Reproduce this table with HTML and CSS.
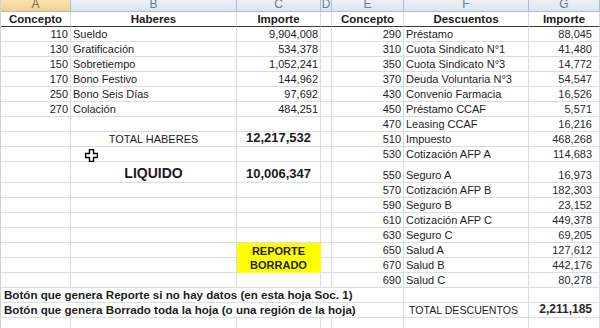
FILE: index.html
```html
<!DOCTYPE html>
<html lang="es">
	<head>
		<meta charset="UTF-8" />
		<meta name="viewport" content="width=device-width, initial-scale=1.0" />
		<title>Liquidación</title>
		<link rel="stylesheet" href="styles.css">
	</head>
	<body>
		<section class="sheet">
			<div class="row letters">
				<div class="c sel">A</div>
				<div class="c">B</div>
				<div class="c">C</div>
				<div class="c">D</div>
				<div class="c">E</div>
				<div class="c">F</div>
				<div class="c">G</div>
			</div>

			<div class="row head">
				<div class="c hd">Concepto</div>
				<div class="c hd">Haberes</div>
				<div class="c hd">Importe</div>
				<div class="c"></div>
				<div class="c hd">Concepto</div>
				<div class="c hd">Descuentos</div>
				<div class="c hd">Importe</div>
			</div>

			<div class="row">
				<div class="c n">110</div><div class="c t">Sueldo</div><div class="c n">9,904,008</div><div class="c"></div>
				<div class="c n">290</div><div class="c t">Préstamo</div><div class="c n g">88,045</div>
			</div>
			<div class="row">
				<div class="c n">130</div><div class="c t">Gratificación</div><div class="c n">534,378</div><div class="c"></div>
				<div class="c n">310</div><div class="c t">Cuota Sindicato N°1</div><div class="c n g">41,480</div>
			</div>
			<div class="row">
				<div class="c n">150</div><div class="c t">Sobretiempo</div><div class="c n">1,052,241</div><div class="c"></div>
				<div class="c n">350</div><div class="c t">Cuota Sindicato N°3</div><div class="c n g">14,772</div>
			</div>
			<div class="row">
				<div class="c n">170</div><div class="c t">Bono Festivo</div><div class="c n">144,962</div><div class="c"></div>
				<div class="c n">370</div><div class="c t">Deuda Voluntaria N°3</div><div class="c n g">54,547</div>
			</div>
			<div class="row">
				<div class="c n">250</div><div class="c t">Bono Seis Días</div><div class="c n">97,692</div><div class="c"></div>
				<div class="c n">430</div><div class="c t">Convenio Farmacia</div><div class="c n g">16,526</div>
			</div>
			<div class="row">
				<div class="c n">270</div><div class="c t">Colación</div><div class="c n">484,251</div><div class="c"></div>
				<div class="c n">450</div><div class="c t">Préstamo CCAF</div><div class="c n g">5,571</div>
			</div>
			<div class="row">
				<div class="c"></div><div class="c"></div><div class="c"></div><div class="c"></div>
				<div class="c n">470</div><div class="c t">Leasing CCAF</div><div class="c n g">16,216</div>
			</div>
			<div class="row">
				<div class="c"></div><div class="c mid">TOTAL HABERES</div><div class="c mid big">12,217,532</div><div class="c"></div>
				<div class="c n">510</div><div class="c t">Impuesto</div><div class="c n g">468,268</div>
			</div>
			<div class="row">
				<div class="c"></div><div class="c"></div><div class="c"></div><div class="c"></div>
				<div class="c n">530</div><div class="c t">Cotización AFP A</div><div class="c n g">114,683</div>
			</div>
			<div class="row tall">
				<div class="c"></div><div class="c mid liq">LIQUIDO</div><div class="c mid big">10,006,347</div><div class="c"></div>
				<div class="c n">550</div><div class="c t">Seguro A</div><div class="c n g">16,973</div>
			</div>
			<div class="row">
				<div class="c"></div><div class="c"></div><div class="c"></div><div class="c"></div>
				<div class="c n">570</div><div class="c t">Cotización AFP B</div><div class="c n g">182,303</div>
			</div>
			<div class="row">
				<div class="c"></div><div class="c"></div><div class="c"></div><div class="c"></div>
				<div class="c n">590</div><div class="c t">Seguro B</div><div class="c n g">23,152</div>
			</div>
			<div class="row">
				<div class="c"></div><div class="c"></div><div class="c"></div><div class="c"></div>
				<div class="c n">610</div><div class="c t">Cotización AFP C</div><div class="c n g">449,378</div>
			</div>
			<div class="row">
				<div class="c"></div><div class="c"></div><div class="c"></div><div class="c"></div>
				<div class="c n">630</div><div class="c t">Seguro C</div><div class="c n g">69,205</div>
			</div>
			<div class="row">
				<div class="c"></div><div class="c"></div><div class="c mid btn top">REPORTE</div><div class="c"></div>
				<div class="c n">650</div><div class="c t">Salud A</div><div class="c n g">127,612</div>
			</div>
			<div class="row">
				<div class="c"></div><div class="c"></div><div class="c mid btn">BORRADO</div><div class="c"></div>
				<div class="c n">670</div><div class="c t">Salud B</div><div class="c n g">442,176</div>
			</div>
			<div class="row">
				<div class="c"></div><div class="c"></div><div class="c"></div><div class="c"></div>
				<div class="c n">690</div><div class="c t">Salud C</div><div class="c n g">80,278</div>
			</div>
			<div class="row">
				<div class="c t note span5">Botón que genera Reporte si no hay datos (en esta hoja Soc. 1)</div>
				<div class="c"></div><div class="c"></div>
			</div>
			<div class="row">
				<div class="c t note span5">Botón que genera Borrado toda la hoja (o una región de la hoja)</div>
				<div class="c t total">TOTAL DESCUENTOS</div><div class="c n g sum">2,211,185</div>
			</div>
			<div class="row">
				<div class="c"></div><div class="c"></div><div class="c"></div><div class="c"></div>
				<div class="c"></div><div class="c"></div><div class="c"></div>
			</div>

			<svg class="cursor" width="13" height="13" viewBox="0 0 13 13">
				<path d="M4.5 0.5h4v4h4v4h-4v4h-4v-4h-4v-4h4z" fill="#fff" stroke="#000" stroke-width="1.4" stroke-linejoin="round" />
			</svg>
		</section>
	</body>
</html>
```

FILE: styles.css
```css
body {
	margin: 0;
	background-color: #fff;
	font-family: "Liberation Sans", Arial, sans-serif;
	font-size: 11px;
	color: #1c1c1c;
	overflow: hidden;
}

.sheet {
	position: relative;
	width: 600px;
	height: 328px;
	overflow: hidden;
	border-left: 1px solid #c9d3df;
	box-sizing: border-box;
}

.row {
	display: grid;
	grid-template-columns: 70px 166px 84px 11px 72px 125px 71px;
	height: 15px;
}

.row.tall {
	height: 21px;
}

.c {
	display: flex;
	align-items: flex-end;
	padding-bottom: 1px;
	border-right: 1px solid #dadde2;
	border-bottom: 1px solid #dadde2;
	box-sizing: border-box;
	white-space: nowrap;
	overflow: hidden;
}

.letters {
	height: 12px;
}

.letters .c {
	justify-content: center;
	align-items: flex-start;
	padding: 0;
	line-height: 8px;
	font-size: 12px;
	color: #6d7c8f;
	background: linear-gradient(#eef2f7, #dce4ee);
	border-right-color: #a9bdd2;
	border-bottom-color: #a9bdd2;
}

.letters .sel {
	color: #7c6a4a;
	background: linear-gradient(#fbe3b6, #f5cf86);
}

.head {
	height: 15px;
}

.head .c {
	border-bottom-color: #3a3a3a;
}

.hd {
	justify-content: center;
	font-size: 11.5px;
	font-weight: 700;
}

.n {
	justify-content: flex-end;
	padding-right: 2px;
}

.n.g {
	padding-right: 7px;
	color: #2a2a2a;
}

.t {
	padding-left: 2px;
}

.mid {
	justify-content: center;
}

.big {
	font-size: 13px;
	font-weight: 700;
}

.liq {
	font-size: 14px;
	font-weight: 700;
}

.btn {
	font-weight: 700;
	background-color: #ffff00;
	border-color: #ffff00;
	color: #222;
}

.btn.top {
	padding-bottom: 0;
}

.span5 {
	grid-column: span 5;
}

.note {
	font-size: 11.6px;
	font-weight: 700;
	padding-left: 3px;
}

.total {
	padding-left: 5px;
	font-size: 10.6px;
}

.sum {
	font-size: 12px;
	font-weight: 700;
}

.cursor {
	position: absolute;
	left: 84px;
	top: 149px;
}
```
